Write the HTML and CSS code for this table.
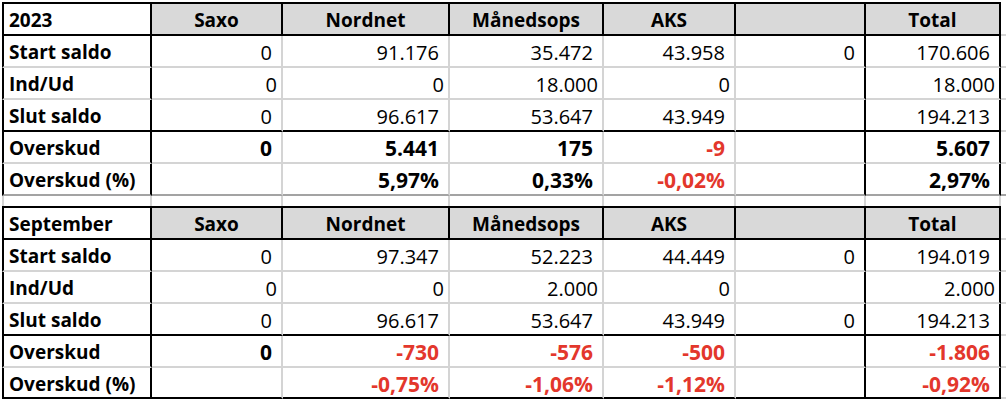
FILE: index.html
```html
<!DOCTYPE html>
<html lang="da">
<head>
<meta charset="utf-8">
<title>Oversigt</title>
<link rel="stylesheet" href="styles.css">
</head>
<body>
<div class="sheet">
  <div class="row head">
    <div class="cell label">2023</div><div class="cell">Saxo</div><div class="cell">Nordnet</div><div class="cell">Månedsops</div><div class="cell">AKS</div><div class="cell"></div><div class="cell">Total</div><div class="ext"></div>
  </div>
  <div class="row data">
    <div class="cell label">Start saldo</div><div class="cell num">0</div><div class="cell num">91.176</div><div class="cell num">35.472</div><div class="cell num">43.958</div><div class="cell num">0</div><div class="cell num">170.606</div><div class="ext"></div>
  </div>
  <div class="row data tight">
    <div class="cell label">Ind/Ud</div><div class="cell num">0</div><div class="cell num">0</div><div class="cell num">18.000</div><div class="cell num">0</div><div class="cell num"></div><div class="cell num">18.000</div><div class="ext"></div>
  </div>
  <div class="row data rule">
    <div class="cell label">Slut saldo</div><div class="cell num">0</div><div class="cell num">96.617</div><div class="cell num">53.647</div><div class="cell num">43.949</div><div class="cell num"></div><div class="cell num">194.213</div><div class="ext"></div>
  </div>
  <div class="row data bold">
    <div class="cell label">Overskud</div><div class="cell num">0</div><div class="cell num">5.441</div><div class="cell num">175</div><div class="cell num neg">-9</div><div class="cell num"></div><div class="cell num">5.607</div><div class="ext"></div>
  </div>
  <div class="row data bold soft-end">
    <div class="cell label">Overskud (%)</div><div class="cell num"></div><div class="cell num">5,97%</div><div class="cell num">0,33%</div><div class="cell num neg">-0,02%</div><div class="cell num"></div><div class="cell num">2,97%</div><div class="ext"></div>
  </div>
  <div class="row spacer">
    <div class="cell label"></div><div class="cell"></div><div class="cell"></div><div class="cell"></div><div class="cell"></div><div class="cell"></div><div class="cell"></div><div class="ext"></div>
  </div>
  <div class="row head">
    <div class="cell label">September</div><div class="cell">Saxo</div><div class="cell">Nordnet</div><div class="cell">Månedsops</div><div class="cell">AKS</div><div class="cell"></div><div class="cell">Total</div><div class="ext"></div>
  </div>
  <div class="row data">
    <div class="cell label">Start saldo</div><div class="cell num">0</div><div class="cell num">97.347</div><div class="cell num">52.223</div><div class="cell num">44.449</div><div class="cell num">0</div><div class="cell num">194.019</div><div class="ext"></div>
  </div>
  <div class="row data tight">
    <div class="cell label">Ind/Ud</div><div class="cell num">0</div><div class="cell num">0</div><div class="cell num">2.000</div><div class="cell num">0</div><div class="cell num"></div><div class="cell num">2.000</div><div class="ext"></div>
  </div>
  <div class="row data rule">
    <div class="cell label">Slut saldo</div><div class="cell num">0</div><div class="cell num">96.617</div><div class="cell num">53.647</div><div class="cell num">43.949</div><div class="cell num">0</div><div class="cell num">194.213</div><div class="ext"></div>
  </div>
  <div class="row data bold">
    <div class="cell label">Overskud</div><div class="cell num">0</div><div class="cell num neg">-730</div><div class="cell num neg">-576</div><div class="cell num neg">-500</div><div class="cell num"></div><div class="cell num neg">-1.806</div><div class="ext"></div>
  </div>
  <div class="row data bold rule last">
    <div class="cell label">Overskud (%)</div><div class="cell num"></div><div class="cell num neg">-0,75%</div><div class="cell num neg">-1,06%</div><div class="cell num neg">-1,12%</div><div class="cell num"></div><div class="cell num neg">-0,92%</div><div class="ext"></div>
  </div>
</div>
</body>
</html>
```

FILE: styles.css
```css
:root {
  --ink: #000;
  --grid: #d4d4d4;
  --head-bg: #d9d9d9;
  --red: #e3372c;
}

* { box-sizing: border-box; }

html, body {
  margin: 0;
  background: #fff;
}

body {
  font-family: "Open Sans", "Liberation Sans", sans-serif;
  font-size: 20px;
  color: var(--ink);
}

.sheet {
  padding: 2px 0 0 2px;
}

.row {
  display: grid;
  grid-template-columns: 150px 131px 167px 154px 132px 130px 135px 1fr;
  height: 32px;
}

.cell {
  display: flex;
  align-items: center;
  white-space: nowrap;
  overflow: hidden;
  border-right: 2px solid var(--grid);
  border-bottom: 2px solid var(--grid);
  line-height: 1;
  padding-top: 3px;
}

.ext {
  border-bottom: 2px solid var(--grid);
}

.label {
  font-weight: 700;
  font-size: 19px;
  padding-left: 5px;
  border-left: 2px solid var(--ink);
  border-right-color: var(--ink);
}

.num {
  justify-content: flex-end;
  padding-right: 9px;
}

.tight .num { padding-right: 4px; }

/* Total column: black left (col 6 right) and outer right border */
.data .cell:nth-child(6),
.data .cell:nth-child(7) {
  border-right-color: var(--ink);
}

.head {
  height: 34px;
}

.head .cell {
  justify-content: center;
  font-weight: 700;
  font-size: 19px;
  padding-top: 2px;
  background: var(--head-bg);
  border-top: 2px solid var(--ink);
  border-bottom-color: var(--ink);
  border-right-color: var(--ink);
}

.head .label {
  justify-content: flex-start;
  background: #fff;
}

.bold .num {
  font-weight: 700;
  font-size: 21px;
}

.rule .cell { border-bottom-color: var(--ink); }

.soft-end .cell,
.soft-end .ext { border-bottom-color: #a3a3a3; }

.last { height: 31px; }

.neg { color: var(--red); }

.spacer {
  height: 10px;
}

.spacer .cell {
  border-bottom: none;
  border-right-color: var(--grid);
  padding-top: 0;
}

.spacer .label {
  border-left-color: var(--grid);
}

.spacer .ext { border-bottom: none; }
```
